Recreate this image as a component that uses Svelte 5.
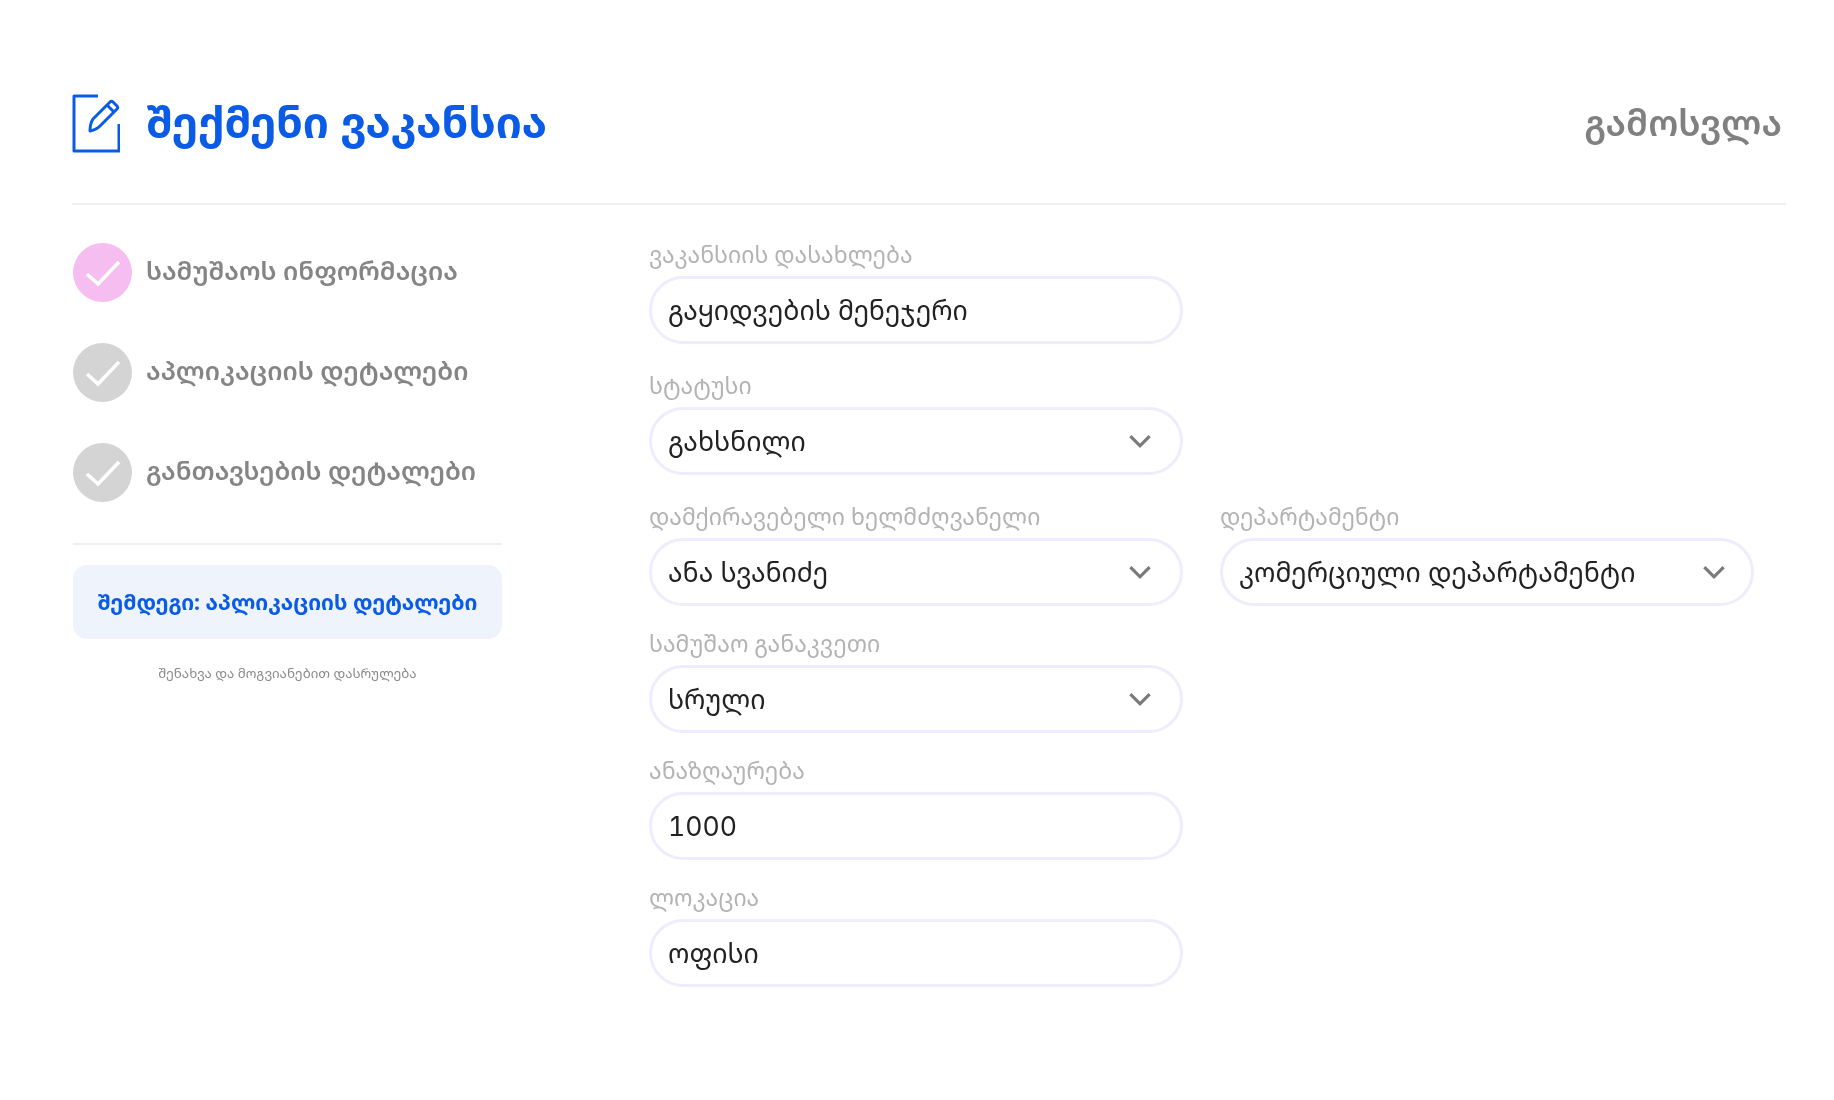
<script>
  const steps = [
    { label: "სამუშაოს ინფორმაცია", active: true },
    { label: "აპლიკაციის დეტალები", active: false },
    { label: "განთავსების დეტალები", active: false }
  ];

  const rows = [
    [{ label: "ვაკანსიის დასახლება", value: "გაყიდვების მენეჯერი" }],
    [{ label: "სტატუსი", value: "გახსნილი", select: true }],
    [
      { label: "დამქირავებელი ხელმძღვანელი", value: "ანა სვანიძე", select: true },
      { label: "დეპარტამენტი", value: "კომერციული დეპარტამენტი", select: true }
    ],
    [{ label: "სამუშაო განაკვეთი", value: "სრული", select: true }],
    [{ label: "ანაზღაურება", value: "1000" }],
    [{ label: "ლოკაცია", value: "ოფისი" }]
  ];
</script>

<div class="page">
  <header>
    <div class="title">
      <svg class="edit" viewBox="0 0 48 59" aria-hidden="true">
        <path d="M26 2H2v55h45V30" />
        <path d="M21 25 38 8c1-1 2-1 3 0l4 4c1 1 1 2 0 3L28 32c-2 2-6 4-10 5 0-5 1-9 3-12Z" />
        <path d="M35 11l7 7" />
      </svg>
      <h1>შექმენი ვაკანსია</h1>
    </div>
    <button type="button" class="logout">გამოსვლა</button>
  </header>

  <div class="body">
    <aside>
      <ul>
        {#each steps as step}
          <li>
            <span class="dot" class:active={step.active}>
              <svg viewBox="0 0 36 28" aria-hidden="true"><path d="M2 15l11 10L34 3" /></svg>
            </span>
            <span class="step-label">{step.label}</span>
          </li>
        {/each}
      </ul>
      <div class="side-actions">
        <button type="button" class="next">შემდეგი: აპლიკაციის დეტალები</button>
        <button type="button" class="save">შენახვა და მოგვიანებით დასრულება</button>
      </div>
    </aside>

    <form>
      {#each rows as row}
        <div class="row">
          {#each row as field}
            <div class="field">
              <span class="label">{field.label}</span>
              <div class="control">
                {field.value}
                {#if field.select}
                  <svg viewBox="0 0 22 14" aria-hidden="true"><path d="M2 2l9 9 9-9" /></svg>
                {/if}
              </div>
            </div>
          {/each}
        </div>
      {/each}
    </form>
  </div>
</div>

<style>
  :global(body) {
    background: #fff;
    font-family: "Noto Sans Georgian", "DejaVu Sans", sans-serif;
  }

  .page {
    padding: 94px 48px 0 72px;
    filter: blur(0.5px);
  }

  header {
    display: flex;
    justify-content: space-between;
    align-items: flex-start;
    height: 109px;
    border-bottom: 2px solid #efefef;
  }

  .title {
    display: flex;
    align-items: center;
    gap: 26px;
  }

  .edit {
    width: 48px;
    height: 59px;
    fill: none;
    stroke: #0a5ce6;
    stroke-width: 3;
    stroke-linejoin: round;
  }

  h1 {
    margin: 0 0 3px;
    font-size: 43.2px;
    line-height: 56px;
    font-weight: 700;
    color: #0a5ce6;
  }

  .logout {
    margin: 0 4px 0 0;
    border: 0;
    background: none;
    padding: 0;
    font: 600 36px/57px "Noto Sans Georgian", sans-serif;
    color: #808080;
  }

  .body {
    display: flex;
    padding-top: 38px;
  }

  aside {
    width: 429px;
    margin: 0 147px 0 1px;
  }

  ul {
    margin: 0;
    padding: 0 0 41px;
    list-style: none;
    display: flex;
    flex-direction: column;
    gap: 41px;
    border-bottom: 2px solid #efefef;
  }

  li {
    display: flex;
    align-items: center;
    gap: 14px;
    height: 59px;
    font-size: 25.7px;
    font-weight: 600;
    color: #858585;
  }

  .step-label {
    margin-top: -4px;
  }

  .dot {
    width: 59px;
    height: 59px;
    border-radius: 50%;
    background: #d4d4d4;
    display: grid;
    place-items: center;
  }

  .dot.active {
    background: #f6bdf0;
  }

  .dot svg {
    width: 36px;
    height: 28px;
    fill: none;
    stroke: #fff;
    stroke-width: 3.5;
  }

  .side-actions {
    display: flex;
    flex-direction: column;
    align-items: center;
    padding-top: 20px;
  }

  .next {
    width: 100%;
    height: 74px;
    border: 0;
    border-radius: 14px;
    padding: 0 0 2px;
    background: #eff3fb;
    color: #0a5ce6;
    font: 700 21.3px "Noto Sans Georgian", sans-serif;
  }

  .save {
    margin-top: 25px;
    border: 0;
    background: none;
    padding: 0;
    color: #8a8a8a;
    font: 13.3px "Noto Sans Georgian", sans-serif;
  }

  form {
    display: flex;
    flex-direction: column;
    gap: 22px;
    margin-top: -4px;
  }

  .row {
    display: flex;
    gap: 37px;
  }

  .row:nth-child(-n+2) {
    padding-bottom: 4px;
  }

  .field {
    width: 534px;
    display: flex;
    flex-direction: column;
    gap: 7px;
  }

  .label {
    font-size: 23px;
    line-height: 30px;
    color: #b3b3b3;
  }

  .control {
    box-sizing: border-box;
    height: 68px;
    padding: 0 28px 0 16px;
    display: flex;
    align-items: center;
    justify-content: space-between;
    border: 3px solid #eeecfd;
    border-radius: 34px;
    font-family: Inter, "Noto Sans Georgian", sans-serif;
    font-size: 26.6px;
    font-variant-numeric: tabular-nums;
    color: #222;
  }

  .field + .field .control {
    padding-right: 25px;
  }

  .control svg {
    width: 24px;
    height: 15px;
    fill: none;
    stroke: #7a7a7a;
    stroke-width: 3;
  }
</style>
